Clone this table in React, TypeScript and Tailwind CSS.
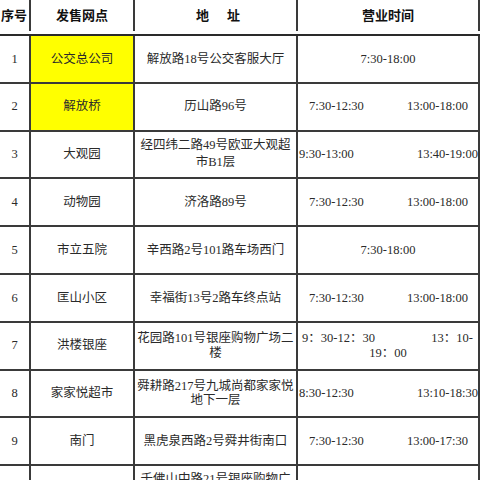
import React from 'react';

type Hours =
  | { kind: 'one'; t: string }
  | { kind: 'two'; a: string; b: string; wide?: boolean }
  | { kind: 'wrap' }
  | { kind: 'none' };

interface Row {
  no: string;
  name: string;
  addr: string[];
  hours: Hours;
  yellow?: boolean;
  lead?: string;
}

const rows: Row[] = [
  { no: '1', name: '公交总公司', addr: ['解放路18号公交客服大厅'], hours: { kind: 'one', t: '7:30-18:00' }, yellow: true },
  { no: '2', name: '解放桥', addr: ['历山路96号'], hours: { kind: 'two', a: '7:30-12:30', b: '13:00-18:00' }, yellow: true },
  {
    no: '3',
    name: '大观园',
    addr: ['经四纬二路49号欧亚大观超', '市B1层'],
    hours: { kind: 'two', a: '9:30-13:00', b: '13:40-19:00', wide: true },
    lead: 'leading-[17px]',
  },
  { no: '4', name: '动物园', addr: ['济洛路89号'], hours: { kind: 'two', a: '7:30-12:30', b: '13:00-18:00' } },
  { no: '5', name: '市立五院', addr: ['辛西路2号101路车场西门'], hours: { kind: 'one', t: '7:30-18:00' } },
  { no: '6', name: '匡山小区', addr: ['幸福街13号2路车终点站'], hours: { kind: 'two', a: '7:30-12:30', b: '13:00-18:00' } },
  { no: '7', name: '洪楼银座', addr: ['花园路101号银座购物广场二', '楼'], hours: { kind: 'wrap' }, lead: 'leading-[14.5px]' },
  {
    no: '8',
    name: '家家悦超市',
    addr: ['舜耕路217号九城尚都家家悦', '地下一层'],
    hours: { kind: 'two', a: '8:30-12:30', b: '13:10-18:30', wide: true },
    lead: 'leading-[14.5px]',
  },
  { no: '9', name: '南门', addr: ['黑虎泉西路2号舜井街南口'], hours: { kind: 'two', a: '7:30-12:30', b: '13:00-17:30' } },
  // last row runs past the bottom of the shot, only the top of the address shows
  { no: '', name: '', addr: ['千佛山中路21号银座购物广'], hours: { kind: 'none' } },
];

const cell = 'flex items-center justify-center text-center border-r-2 border-[#3a3a3a]';

const HoursCell: React.FC<{ h: Hours }> = ({ h }) => {
  if (h.kind === 'none') return <div className={cell} />;
  if (h.kind === 'one') return <div className={cell}>{h.t}</div>;
  if (h.kind === 'two')
    return (
      <div className={`${cell} !justify-between whitespace-nowrap ${h.wide ? 'pl-[1px] pr-0' : 'pl-[11px] pr-[10px]'}`}>
        <span>{h.a}</span>
        <span>{h.b}</span>
      </div>
    );
  return (
    <div className={`${cell} flex-col !items-stretch leading-[15px]`}>
      <div className="flex justify-between pl-[4px] pr-[5px] whitespace-nowrap">
        <span>9：30-12：30</span>
        <span>13：10-</span>
      </div>
      <div>19：00</div>
    </div>
  );
};

export default function App() {
  return (
    <div
      className="h-[480px] w-[480px] overflow-hidden bg-white text-[12.5px] text-[#2a2a2a]"
      style={{ fontFamily: '"Liberation Serif", "Noto Sans CJK SC", serif' }}
    >
      <div className="grid h-[36px] grid-cols-[31px_104px_163px_182px] border-b-2 border-[#2a2a2a] pb-[3px] text-[13px] font-bold text-[#111]">
        <div className={`${cell} !justify-end pr-[2px]`}>序号</div>
        <div className={cell}>发售网点</div>
        <div className={`${cell} gap-[18px] pl-[5px]`}>
          <span>地</span>
          <span>址</span>
        </div>
        <div className={cell}>营业时间</div>
      </div>
      {rows.map((r, i) => (
        <div key={i} className="grid h-[47.8px] grid-cols-[31px_104px_163px_182px] border-b-2 border-[#3a3a3a]">
          <div className={cell}>{r.no}</div>
          <div className={`${cell} ${r.yellow ? 'bg-[#ffff00]' : ''}`}>{r.name}</div>
          {r.no ? (
            <div className={`${cell} flex-col whitespace-nowrap ${r.lead ?? ''}`}>
              {r.addr.map((l) => (
                <div key={l}>{l}</div>
              ))}
            </div>
          ) : (
            <div className={`${cell} !items-start whitespace-nowrap pt-[6px] leading-[15px]`}>{r.addr[0]}</div>
          )}
          <HoursCell h={r.hours} />
        </div>
      ))}
    </div>
  );
}
